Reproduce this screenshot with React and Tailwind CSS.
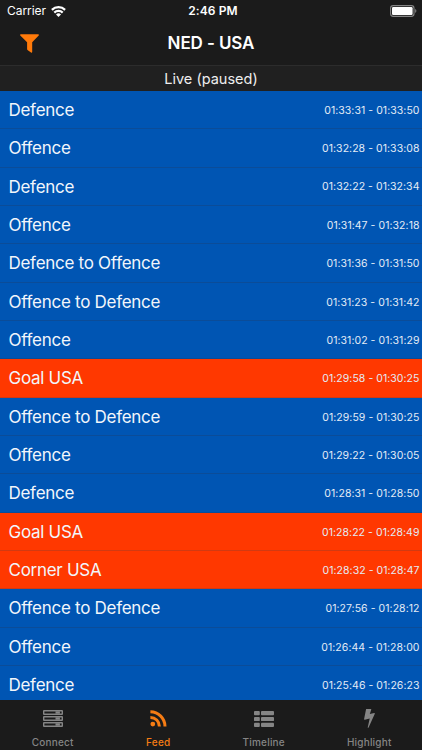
import React, { useState } from 'react'

const events = [
    { name: 'Defence', time: '01:33:31 - 01:33:50' },
    { name: 'Offence', time: '01:32:28 - 01:33:08' },
    { name: 'Defence', time: '01:32:22 - 01:32:34' },
    { name: 'Offence', time: '01:31:47 - 01:32:18' },
    { name: 'Defence to Offence', time: '01:31:36 - 01:31:50' },
    { name: 'Offence to Defence', time: '01:31:23 - 01:31:42' },
    { name: 'Offence', time: '01:31:02 - 01:31:29' },
    { name: 'Goal USA', time: '01:29:58 - 01:30:25', important: true },
    { name: 'Offence to Defence', time: '01:29:59 - 01:30:25' },
    { name: 'Offence', time: '01:29:22 - 01:30:05' },
    { name: 'Defence', time: '01:28:31 - 01:28:50' },
    { name: 'Goal USA', time: '01:28:22 - 01:28:49', important: true },
    { name: 'Corner USA', time: '01:28:32 - 01:28:47', important: true },
    { name: 'Offence to Defence', time: '01:27:56 - 01:28:12' },
    { name: 'Offence', time: '01:26:44 - 01:28:00' },
    { name: 'Defence', time: '01:25:46 - 01:26:23' },
]

const WifiIcon = () => (
    <svg width="15" height="11" viewBox="0 0 15 11" fill="none" stroke="white" strokeWidth="2.2">
        <path d="M.9 3.9a9.4 9.4 0 0 1 13.2 0" />
        <path d="M3.3 6.6a6 6 0 0 1 8.4 0" />
        <path d="M7.5 10.9L5 8.4a3.6 3.6 0 0 1 5 0z" fill="white" stroke="none" />
    </svg>
)

const BatteryIcon = () => (
    <svg width="27" height="12" viewBox="0 0 27 12">
        <rect x="0.6" y="0.6" width="23.4" height="10.8" rx="2.6" fill="none" stroke="#858585" strokeWidth="1.1" />
        <rect x="2" y="2" width="20.6" height="8" rx="1.2" fill="white" />
        <path d="M25.2 4.1c1.6.6 1.6 3.2 0 3.8z" fill="#858585" />
    </svg>
)

const FilterIcon = () => (
    <svg width="19" height="19" viewBox="0 0 19 19" fill="#ff7a0a">
        <path d="M.8.2h17.4c.7 0 1 .8.5 1.3L12.2 8.3v9.6c0 .7-.7 1-1.2.6l-3.5-2.6c-.3-.2-.4-.5-.4-.8V8.3L.3 1.5C-.2 1 .1.2.8.2z" />
    </svg>
)

const ConnectIcon = () => (
    <svg width="20" height="17" viewBox="0 0 20 17">
        {[0, 6, 12].map((y) => (
            <g key={y}>
                <rect x="0.7" y={y + 0.7} width="18.6" height="3.6" rx="0.3" fill="none" stroke="currentColor" strokeWidth="1.4" />
                <rect x="12.5" y={y + 1.3} width="4.4" height="2.4" fill="currentColor" />
            </g>
        ))}
    </svg>
)

const FeedIcon = () => (
    <svg width="17" height="17" viewBox="0 0 17 17" fill="none" stroke="currentColor" strokeWidth="3">
        <circle cx="2.8" cy="14.1" r="2.4" fill="currentColor" stroke="none" />
        <path d="M.4 7.4a9 9 0 0 1 9 9" />
        <path d="M.4 1.8A14.6 14.6 0 0 1 15 16.4" />
    </svg>
)

const TimelineIcon = () => (
    <svg width="20" height="16" viewBox="0 0 20 16" fill="currentColor">
        {[0, 5.9, 11.8].map((y) => (
            <g key={y}>
                <rect x="0" y={y} width="5.8" height="4.2" rx="0.9" />
                <rect x="7" y={y} width="13" height="4.2" rx="0.9" />
            </g>
        ))}
    </svg>
)

const HighlightIcon = () => (
    <svg width="11" height="19" viewBox="0 0 11 19" fill="currentColor">
        <path d="M2.5 0h4.3c.4 0 .6.3.5.6L5.8 5l4.4-1c.5-.1.8.3.6.7L4.6 18.6c-.2.4-1 .3-.9-.2L5.7 9.6.8 10.8c-.5.1-.9-.2-.7-.7L2 .4c.1-.2.3-.4.5-.4z" />
    </svg>
)

const tabs = [
    { label: 'Connect', Icon: ConnectIcon },
    { label: 'Feed', Icon: FeedIcon },
    { label: 'Timeline', Icon: TimelineIcon },
    { label: 'Highlight', Icon: HighlightIcon },
]

const App = () => {
    const [activeTab, setActiveTab] = useState('Feed')

    return (
        <div className="flex h-[750px] w-[422px] flex-col overflow-hidden bg-[#1b1b1b] font-['Inter',sans-serif] text-white">
            {/* Status bar */}
            <div className="grid h-[22px] shrink-0 grid-cols-3 items-center pl-[7px] pr-[5px] text-[12px]">
                <div className="flex items-center gap-[5px]">
                    <span className="tracking-[-0.05px]">Carrier</span>
                    <WifiIcon />
                </div>
                <span className="pl-[2px] text-center font-semibold tracking-[0.1px]">2:46 PM</span>
                <div className="flex justify-end">
                    <BatteryIcon />
                </div>
            </div>

            {/* Nav bar */}
            <div className="grid h-[43px] shrink-0 grid-cols-3 items-center">
                <button className="ml-[20px] w-[19px]" aria-label="Filter">
                    <FilterIcon />
                </button>
                <h1 className="text-center text-[17px] font-semibold tracking-[-0.1px]">NED - USA</h1>
            </div>

            <div className="flex h-[26px] shrink-0 items-center justify-center border-t border-[#2c2c2c] bg-[#202020] text-[14.5px] text-[#eeeeee]">
                Live (paused)
            </div>

            {/* Event feed */}
            <ul className="h-[609px] shrink-0 overflow-hidden bg-[#0055b3]">
                {events.map((event, index) => (
                    <li
                        key={index + 'event'}
                        className={`flex h-[38.35px] items-center justify-between border-b pt-[2px] pl-[8.5px] pr-[2.5px] ${
                            event.important ? 'border-[#d23a12] bg-[#ff3800]' : 'border-[#0b4c98] bg-[#0055b3]'
                        }`}
                    >
                        <span className="text-[17px] tracking-[-0.28px] text-[#f2f6fb]">{event.name}</span>
                        <span className="text-[10.5px] tracking-[0.05px] text-[#e4ecf6]">{event.time}</span>
                    </li>
                ))}
            </ul>

            {/* Tab bar */}
            <div className="grid h-[50px] shrink-0 grid-cols-4">
                {tabs.map(({ label, Icon }) => (
                    <button
                        key={label}
                        onClick={() => setActiveTab(label)}
                        className={`flex flex-col items-center ${activeTab === label ? 'text-[#f57c14]' : 'text-[#858585]'}`}
                    >
                        <span className="flex h-[37px] items-center">
                            <Icon />
                        </span>
                        <span className="-mt-px text-[10px] leading-[12px] font-medium tracking-[0.2px]">{label}</span>
                    </button>
                ))}
            </div>
        </div>
    )
}

export default App
